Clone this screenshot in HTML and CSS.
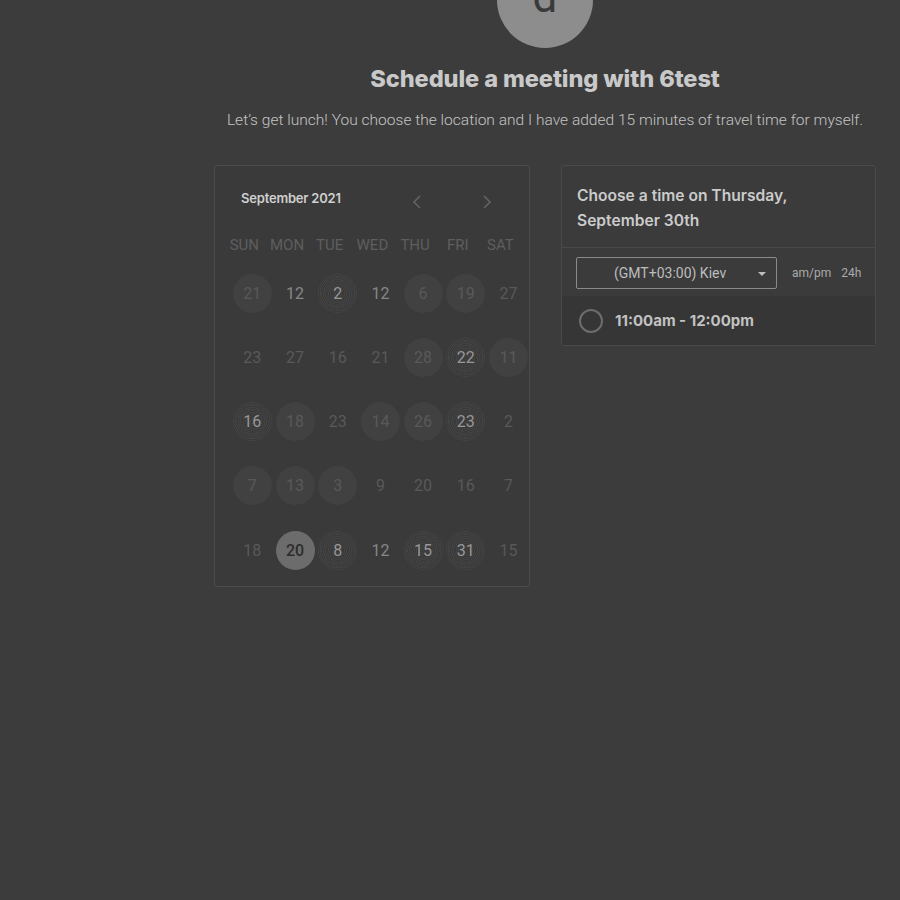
FILE: index.html
```html
<!DOCTYPE html>
<html>
<head>
<meta charset="utf-8">
<link rel="stylesheet" href="styles.css">
</head>
<body>
<div class="page">
  <div class="avatar"><span>d</span></div>
  <h1 class="title">Schedule a meeting with 6test</h1>
  <p class="subtitle">Let’s get lunch! You choose the location and I have added 15 minutes of travel time for myself.</p>
  <div class="panels">
    <div class="cal">
      <div class="cal-head">
        <span class="month">September 2021</span>
        <span class="navs">
          <svg class="chev" width="10" height="16" viewBox="0 0 10 16"><path d="M8 2 L2 8 L8 14" fill="none" stroke="currentColor" stroke-width="1.6"/></svg>
          <svg class="chev" width="10" height="16" viewBox="0 0 10 16"><path d="M2 2 L8 8 L2 14" fill="none" stroke="currentColor" stroke-width="1.6"/></svg>
        </span>
      </div>
      <div class="grid">
        <div class="wd">SUN</div><div class="wd">MON</div><div class="wd">TUE</div><div class="wd">WED</div><div class="wd">THU</div><div class="wd">FRI</div><div class="wd">SAT</div>

        <div class="d c">21</div><div class="d b">12</div><div class="d t">2</div><div class="d b">12</div><div class="d c">6</div><div class="d c">19</div><div class="d">27</div>

        <div class="d">23</div><div class="d">27</div><div class="d">16</div><div class="d">21</div><div class="d c">28</div><div class="d t">22</div><div class="d c">11</div>

        <div class="d t">16</div><div class="d c">18</div><div class="d">23</div><div class="d c">14</div><div class="d c">26</div><div class="d t">23</div><div class="d">2</div>

        <div class="d c">7</div><div class="d c">13</div><div class="d c">3</div><div class="d">9</div><div class="d">20</div><div class="d">16</div><div class="d">7</div>

        <div class="d">18</div><div class="d sel">20</div><div class="d t">8</div><div class="d b">12</div><div class="d t">15</div><div class="d t">31</div><div class="d">15</div>
      </div>
    </div>
    <div class="times">
      <div class="times-head">Choose a time on Thursday, September 30th</div>
      <div class="tz-row">
        <div class="tz-select"><span>(GMT+03:00) Kiev</span><span class="caret"></span></div>
        <div class="fmt"><span>am/pm</span><span>24h</span></div>
      </div>
      <div class="slot">
        <span class="radio"></span>
        <span class="slot-text">11:00am - 12:00pm</span>
      </div>
    </div>
  </div>
</div>
</body>
</html>
```
FILE: styles.css
```css
html, body {
  margin: 0;
  padding: 0;
  background: #3c3c3c;
  height: 100%;
}
body {
  font-family: Roboto, "Liberation Sans", sans-serif;
  overflow: hidden;
}
.page {
  width: 662px;
  margin-left: 214px;
  display: flex;
  flex-direction: column;
  align-items: center;
}
.avatar {
  width: 96px;
  height: 96px;
  border-radius: 50%;
  background: #8d8d8d;
  margin-top: -48px;
  display: flex;
  align-items: center;
  justify-content: center;
}
.avatar span {
  font-family: Roboto, sans-serif;
  font-size: 44px;
  color: #3a3a3a;
  line-height: 1;
  margin-top: -6px;
}
.title {
  margin: 16px 0 0;
  font-family: Inter, sans-serif;
  font-weight: 800;
  font-size: 23.6px;
  line-height: 30px;
  color: #c9c9c9;
  letter-spacing: -0.1px;
}
.subtitle {
  margin: 16px 0 0;
  font-family: Roboto, sans-serif;
  font-weight: 300;
  font-size: 15.55px;
  line-height: 20px;
  color: #c4c4c4;
}
.panels {
  margin-top: 35px;
  width: 100%;
  display: flex;
  gap: 31px;
  align-items: flex-start;
}
.cal {
  width: 316px;
  height: 422px;
  box-sizing: border-box;
  border: 1px solid #4c4c4c;
  border-radius: 3px;
  background: #3a3a3a;
}
.cal-head {
  display: flex;
  align-items: center;
  padding: 20px 0 0 26px;
  height: 24px;
}
.month {
  font-family: Inter, sans-serif;
  font-weight: 600;
  font-size: 13px;
  color: #cfcfcf;
  letter-spacing: -0.2px;
}
.navs {
  margin-left: 71px;
  display: flex;
  gap: 60px;
  color: #626262;
  padding-top: 8px;
}
.grid {
  display: grid;
  grid-template-columns: repeat(7, 42.7px);
  grid-template-rows: 32px;
  grid-auto-rows: 64.25px;
  padding-left: 8px;
  margin-top: 19px;
}
.wd {
  font-size: 15px;
  color: #5e5e5e;
  display: flex;
  align-items: center;
  justify-content: center;
  height: 32px;
}
.d {
  justify-self: center;
  align-self: center;
  margin-left: 16px;
  width: 39px;
  height: 39px;
  border-radius: 50%;
  display: flex;
  align-items: center;
  justify-content: center;
  font-size: 16px;
  color: #595959;
}
.d.c {
  background: #414141;
}
.d.b {
  color: #878787;
}
.d.t {
  color: #979797;
  background: repeating-radial-gradient(circle at 50% 50%, #434343 0 0.8px, #3a3a3a 0.8px 1.7px);
}
.d.sel {
  background: #6c6c6c;
  color: #2c2c2c;
  font-weight: 500;
}
.times {
  width: 315px;
  box-sizing: border-box;
  border: 1px solid #4a4a4a;
  border-radius: 3px;
  background: #3b3b3b;
}
.times-head {
  padding: 17px 60px 14px 15px;
  font-family: Inter, sans-serif;
  font-weight: 600;
  font-size: 15.6px;
  line-height: 25px;
  color: #cbcbcb;
  border-bottom: 1px solid #4a4a4a;
}
.tz-row {
  display: flex;
  align-items: center;
  padding: 9px 0 7px 14px;
}
.tz-select {
  width: 201px;
  height: 32px;
  box-sizing: border-box;
  border: 1px solid #8a8a8a;
  border-radius: 2px;
  display: flex;
  align-items: center;
  padding-left: 37px;
  font-size: 14px;
  color: #bdbdbd;
  position: relative;
}
.caret {
  position: absolute;
  right: 10px;
  top: 14px;
  border-left: 4px solid transparent;
  border-right: 4px solid transparent;
  border-top: 4px solid #bdbdbd;
}
.fmt {
  margin-left: 15px;
  display: flex;
  gap: 10px;
  font-size: 12px;
  color: #aaaaaa;
}
.slot {
  background: #363636;
  height: 49px;
  display: flex;
  align-items: center;
  padding-left: 17px;
}
.radio {
  width: 20px;
  height: 20px;
  border: 2px solid #6d6d6d;
  border-radius: 50%;
}
.slot-text {
  margin-left: 12px;
  font-family: Inter, sans-serif;
  font-weight: 700;
  font-size: 15px;
  color: #c2c2c2;
}
```
